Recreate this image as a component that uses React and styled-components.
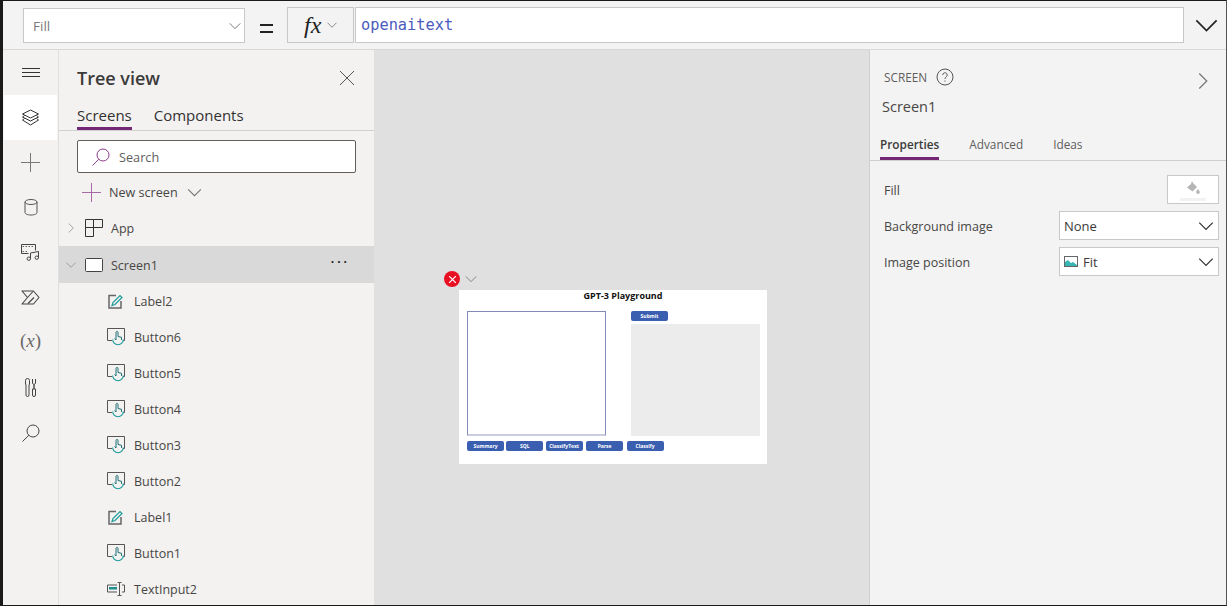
import React from "react";
import styled, { createGlobalStyle } from "styled-components";

const GlobalStyle = createGlobalStyle`
  html, body {
    margin: 0;
    padding: 0;
    background: #f3f2f1;
  }
  * {
    box-sizing: border-box;
  }
`;

const Frame = styled.div`
  width: 1227px;
  height: 606px;
  display: flex;
  flex-direction: column;
  overflow: hidden;
  border-left: 3px solid #1a1a1a;
  border-top: 1px solid #1a1a1a;
  border-bottom: 1px solid #1a1a1a;
  border-right: 1px solid #555;
  font-family: "Open Sans", "Liberation Sans", sans-serif;
  color: #3b3a39;
  background: #f3f2f1;
`;

const FormulaBar = styled.div`
  height: 49px;
  flex: none;
  display: flex;
  align-items: center;
  padding-left: 20px;
  background: #f3f3f3;
  border-bottom: 1px solid #d8d8d8;
`;

const PropertySelect = styled.div`
  width: 222px;
  height: 35px;
  margin-top: 1px;
  display: flex;
  align-items: center;
  justify-content: space-between;
  padding: 1px 2px 0 9px;
  background: #fff;
  border: 1px solid #c8c8c8;
  font-size: 13.5px;
  color: #7a7a7a;
`;

const Equals = styled.div`
  width: 42px;
  display: flex;
  justify-content: center;
`;

const EqualsMark = styled.span`
  display: block;
  width: 13px;
  height: 9px;
  margin: 7px 0 0 1px;
  border-top: 2px solid #222;
  border-bottom: 2px solid #222;
`;

const FxButton = styled.div`
  width: 67px;
  height: 36px;
  display: flex;
  align-items: center;
  padding-left: 16px;
  gap: 5px;
  background: #f3f3f3;
  border: 1px solid #c8c8c8;
`;

const FxText = styled.span`
  font-family: "Liberation Serif", serif;
  font-style: italic;
  font-size: 24px;
  line-height: 28px;
  color: #222;
`;

const FormulaInput = styled.div`
  width: 829px;
  height: 36px;
  display: flex;
  align-items: center;
  padding-left: 5px;
  background: #fff;
  border: 1px solid #c8c8c8;
  margin-left: 1px;
  font-family: "DejaVu Sans Mono", monospace;
  font-size: 15.3px;
  color: #4a5bbd;
`;

const ExpandButton = styled.div`
  flex: 1;
  display: flex;
  justify-content: center;
  align-items: center;
  padding-left: 2px;
`;

const Body = styled.div`
  flex: 1;
  min-height: 0;
  display: flex;
`;

const Rail = styled.div`
  width: 55px;
  flex: none;
  display: flex;
  flex-direction: column;
  background: #f3f2f1;
`;

const RailItem = styled.div`
  height: 45px;
  width: 53px;
  margin-left: 1px;
  display: flex;
  align-items: center;
  justify-content: center;
  background: ${(p) => (p.$active ? "#fff" : "transparent")};
`;

const TreePanel = styled.div`
  width: 316px;
  flex: none;
  display: flex;
  flex-direction: column;
  background: #f3f2f1;
  border-left: 1px solid #e1dfdd;
`;

const TreeHeader = styled.div`
  height: 55px;
  flex: none;
  display: flex;
  align-items: center;
  justify-content: space-between;
  padding: 0 20px 0 18px;
`;

const TreeTitle = styled.div`
  font-size: 18px;
  font-weight: 600;
  color: #3b3a39;
`;

const TabRow = styled.div`
  height: 26px;
  flex: none;
  display: flex;
  gap: 22px;
  padding-left: 18px;
  border-bottom: 1px solid #d2d0ce;
`;

const Tab = styled.div`
  height: 25px;
  font-size: 15px;
  line-height: 20px;
  color: #323130;
  border-bottom: ${(p) => (p.$active ? "3px solid #742774" : "none")};
`;

const SearchBox = styled.div`
  height: 33px;
  flex: none;
  margin: 9px 18px 0 18px;
  display: flex;
  align-items: center;
  gap: 9px;
  padding-left: 14px;
  background: #fff;
  border: 1px solid #605e5c;
  border-radius: 2px;
  font-size: 12.7px;
  color: #605e5c;
`;

const NewScreen = styled.div`
  height: 37px;
  flex: none;
  display: flex;
  align-items: center;
  padding: 2px 0 0 23px;
  gap: 8px;
  font-size: 12.6px;
  color: #484644;
`;

const TreeRow = styled.div`
  height: ${(p) => (p.$selected ? 37 : 36)}px;
  flex: none;
  display: flex;
  align-items: center;
  padding-left: ${(p) => p.$indent}px;
  padding-top: ${(p) => (p.$selected ? 1 : 0)}px;
  gap: ${(p) => p.$gap}px;
  font-size: 12.5px;
  color: #484644;
  background: ${(p) => (p.$selected ? "#d9d9d9" : "transparent")};
  position: relative;
`;

const IconSlot = styled.span`
  width: ${(p) => p.$width}px;
  display: flex;
  justify-content: center;
  flex: none;
`;

const MoreDots = styled.span`
  position: absolute;
  right: 24px;
  top: 8px;
  font-size: 12px;
  font-weight: 700;
  letter-spacing: 3px;
  line-height: 10px;
  color: #222;
`;

const Canvas = styled.div`
  flex: 1;
  min-width: 0;
  display: flex;
  flex-direction: column;
  align-items: flex-start;
  padding: 222px 0 0 85px;
  background: #e0e0e0;
  position: relative;
`;

const ErrorBadge = styled.div`
  position: absolute;
  left: 70px;
  top: 221px;
  display: flex;
  align-items: center;
  gap: 4px;
`;

const ErrorDot = styled.div`
  width: 16px;
  height: 16px;
  border-radius: 50%;
  background: #e81123;
  display: flex;
  align-items: center;
  justify-content: center;
`;

const AppScreen = styled.div`
  width: 308px;
  height: 174px;
  margin-top: 18px;
  background: #fff;
  padding: 0 7px 0 8px;
  display: flex;
  flex-direction: column;
`;

const AppTitle = styled.div`
  height: 21px;
  padding-left: 19px;
  text-align: center;
  font-size: 9px;
  font-weight: 700;
  line-height: 12px;
  color: #111;
`;

const AppColumns = styled.div`
  display: flex;
  justify-content: space-between;
`;

const PromptBox = styled.div`
  width: 139px;
  height: 125px;
  background: #fff;
  border: 1px solid #8389b8;
  border-bottom: 2px solid #c9cce0;
`;

const ResultColumn = styled.div`
  width: 129px;
  display: flex;
  flex-direction: column;
  align-items: flex-start;
  gap: 3px;
`;

const ResultBox = styled.div`
  width: 129px;
  height: 112px;
  background: #ececec;
`;

const AppButton = styled.div`
  width: 37px;
  height: 10px;
  background: #3b5fb0;
  border-radius: 2px;
  color: #fff;
  font-size: 5px;
  font-weight: 700;
  line-height: 10px;
  text-align: center;
  white-space: nowrap;
  overflow: hidden;
`;

const AppButtonRow = styled.div`
  display: flex;
  gap: 2.3px;
  margin-top: 5px;

  ${AppButton}:nth-child(n + 4) {
    margin-left: 1.2px;
  }
`;

const PropsPanel = styled.div`
  width: 357px;
  flex: none;
  display: flex;
  flex-direction: column;
  background: #f3f3f3;
  border-left: 1px solid #d2d0ce;
`;

const PropsHeader = styled.div`
  height: 83px;
  flex: none;
  padding: 17px 0 0 12px;
  position: relative;
`;

const PropsKind = styled.div`
  display: flex;
  align-items: center;
  gap: 9px;
  height: 20px;
  padding-left: 2px;
  font-size: 11.8px;
  color: #605e5c;
`;

const PropsName = styled.div`
  margin-top: 10px;
  font-size: 14.5px;
  line-height: 20px;
  color: #484644;
`;

const CollapseButton = styled.div`
  position: absolute;
  right: 13px;
  top: 21px;
`;

const PropsTabs = styled.div`
  height: 28px;
  flex: none;
  display: flex;
  gap: 30px;
  padding: 1px 0 0 10px;
  border-bottom: 1px solid #cfcfcf;
`;

const PropsTab = styled.div`
  height: 26px;
  font-size: 11.8px;
  line-height: 20px;
  font-weight: ${(p) => (p.$active ? 600 : 400)};
  color: ${(p) => (p.$active ? "#3b3a39" : "#605e5c")};
  border-bottom: ${(p) => (p.$active ? "3px solid #742774" : "none")};
`;

const PropRows = styled.div`
  display: flex;
  flex-direction: column;
  gap: 7px;
  padding: 14px 7px 0 14px;
`;

const PropRow = styled.div`
  height: 29px;
  display: flex;
  align-items: center;
  justify-content: space-between;
  font-size: 12.5px;
  color: #484644;
`;

const PropLabel = styled.span`
  padding-top: 2px;
`;

const ColorSwatch = styled.div`
  width: 52px;
  height: 29px;
  background: #fff;
  border: 1px solid #c8c8c8;
  display: flex;
  justify-content: center;
  padding-top: 4px;
`;

const PropSelect = styled.div`
  width: 160px;
  height: 29px;
  background: #fff;
  border: 1px solid #c8c8c8;
  display: flex;
  align-items: center;
  gap: 5px;
  padding: 0 3px 0 4px;
  font-size: 13px;
  color: #3b3a39;
`;

const SelectValue = styled.span`
  flex: 1;
`;

const RailVar = styled.span`
  font-family: "Liberation Serif", serif;
  font-size: 19px;
  padding-bottom: 3px;
  color: #6a6a6a;
`;

const Chevron = ({ size = 14, color = "#555", dir = "down", w = 1 }) => {
  const d = {
    down: "M2 5l6 6 6-6",
    right: "M5 2l6 6-6 6",
  }[dir];
  return (
    <svg width={size} height={size} viewBox="0 0 16 16" fill="none" stroke={color} strokeWidth={w}>
      <path d={d} />
    </svg>
  );
};

const MenuIcon = () => (
  <svg width="18" height="10" viewBox="0 0 18 10" fill="none" stroke="#333" strokeWidth="1">
    <path d="M0 .5h18M0 4.5h18M0 8.5h18" />
  </svg>
);

const LayersIcon = () => (
  <svg width="17" height="17" viewBox="0 0 17 17" fill="none" stroke="#333" strokeWidth="1" strokeLinejoin="round">
    <path d="M8.5 1l8 4-8 4-8-4z" />
    <path d="M2.5 6.500L.5 8l8 4 8-4-2-1.500" />
    <path d="M2.500 9.500L.5 11l8 5 8-5-2-1.500" />
  </svg>
);

const PlusIcon = ({ color = "#777" }) => (
  <svg width="19" height="19" viewBox="0 0 19 19" fill="none" stroke={color} strokeWidth="1">
    <path d="M9.500 0v19M0 9.500h19" />
  </svg>
);

const DataIcon = () => (
  <svg width="14" height="17" viewBox="0 0 14 17" fill="none" stroke="#555" strokeWidth="1">
    <ellipse cx="7" cy="3" rx="6" ry="2.500" />
    <path d="M1 3v10.500c0 1.500 2.500 2.500 6 2.500s6-1 6-2.500V3" />
  </svg>
);

const MediaIcon = () => (
  <svg width="19" height="17" viewBox="0 0 19 17" fill="none" stroke="#444" strokeWidth="1">
    <path d="M.5 .5h14M.5 9.500h7M.5 .5v9M14.500 .5v6" />
    <path d="M1.500 2.500h12M1.500 7.500h6" strokeDasharray="1.500 1.500" strokeWidth=".8" />
    <path d="M9.500 14.500V9l8-1.500v6" />
    <circle cx="7.800" cy="14.700" r="1.700" />
    <circle cx="15.800" cy="13.700" r="1.700" />
  </svg>
);

const FlowIcon = () => (
  <svg width="19" height="15" viewBox="0 0 19 15" fill="none" stroke="#444" strokeWidth="1.100" strokeLinejoin="round">
    <path d="M1 1h11.500l5.500 6.500-5.500 6.500H1l5.500-6.500z" />
    <path d="M6.500 7.500L12 1.500M7 13.500l6-6" />
  </svg>
);

const ToolsIcon = () => (
  <svg width="12" height="19" viewBox="0 0 12 19" fill="none" stroke="#444" strokeWidth="1">
    <path d="M.5 2.500a2 2 0 014 0V6L4 7v10a1.500 1.500 0 01-3 0V7l-.5-1z" />
    <path d="M7.500 1v4.500l1.500 1 1.500-1V1" />
    <path d="M9 6.500V11" strokeWidth="1.400" />
    <path d="M7.500 11h3v6a1.500 1.500 0 01-3 0z" />
  </svg>
);

const SearchIcon = ({ color = "#444" }) => (
  <svg width="18" height="18" viewBox="0 0 18 18" fill="none" stroke={color} strokeWidth="1">
    <circle cx="11" cy="7" r="6" />
    <path d="M6.800 11.300L.5 17.500" />
  </svg>
);

const CloseIcon = ({ size = 14, color = "#555", w = 1 }) => (
  <svg width={size} height={size} viewBox="0 0 14 14" fill="none" stroke={color} strokeWidth={w}>
    <path d="M0 0l14 14M14 0L0 14" />
  </svg>
);

const AppGridIcon = () => (
  <svg width="18" height="18" viewBox="0 0 18 18" fill="none" stroke="#333" strokeWidth="1">
    <path d="M.5.500h8v8h-8zM8.500.500h9v8h-9zM.5 8.500h8v9h-8z" />
  </svg>
);

const ScreenIcon = () => (
  <svg width="18" height="14" viewBox="0 0 18 14" fill="#fff" stroke="#444" strokeWidth="1">
    <rect x=".5" y=".5" width="17" height="13" rx="1" />
  </svg>
);

const LabelIcon = () => (
  <svg width="16" height="15" viewBox="0 0 16 15" fill="none">
    <path d="M8 1.500H1v12.500h12V7" stroke="#666" strokeWidth="1.500" />
    <path d="M4 11.500l1-3 7-7 2 2-7 7z" stroke="#1d9a9a" strokeWidth="1.200" />
  </svg>
);

const ButtonIcon = () => (
  <svg width="18" height="18" viewBox="0 0 18 18" fill="none">
    <path d="M5 12.500H.5V.5h17v12H16" stroke="#555" strokeWidth="1" />
    <path d="M5.700 11.400a5.300 5.300 0 1010.600 0" stroke="#1d9a9a" strokeWidth="1.100" />
    <path d="M7.500 10.500L9 12V4.500a1 1 0 012 0v4l3.500 .8V12" stroke="#1f6f75" strokeWidth="1" />
  </svg>
);

const TextInputIcon = () => (
  <svg width="18" height="14" viewBox="0 0 18 14" fill="none">
    <path d="M10 3H.5v7H10M15 3h2.500v7H15" stroke="#555" strokeWidth="1" />
    <path d="M2 5h8v2.500H2z" fill="#1d8f8f" />
    <path d="M10.500 .5h4M12.500 .5v13M10.500 13.500h4" stroke="#555" strokeWidth="1" />
  </svg>
);

const HelpIcon = () => (
  <svg width="18" height="18" viewBox="0 0 18 18" fill="none" stroke="#555" strokeWidth="1">
    <circle cx="9" cy="9" r="8" />
    <path d="M6.800 7a2.200 2.200 0 114 1.200C10 9.200 9 9.500 9 11" />
    <path d="M9 12.500v1.200" />
  </svg>
);

const BucketIcon = () => (
  <svg width="28" height="22" viewBox="0 0 28 22">
    <path d="M13 1l1 2 4 4-4.500 4.500L8 7.500l4-3.500z" fill="#b5b5b5" />
    <path d="M19 9c1 1.500 1.800 2.400 1.800 3.300a1.800 1.800 0 01-3.600 0c0-.9.800-1.800 1.800-3.300z" fill="#b5b5b5" />
    <rect x="1" y="18" width="26" height="3" fill="#f2f2f2" />
  </svg>
);

const PictureIcon = () => (
  <svg width="14" height="11" viewBox="0 0 14 11">
    <rect x=".5" y=".5" width="13" height="10" fill="#fff" stroke="#666" />
    <path d="M1 10V6l3-2 3 3 2-1 4 3v1z" fill="#3ab5b5" />
  </svg>
);

const railIcons = [
  <LayersIcon key="layers" />,
  <PlusIcon key="plus" />,
  <DataIcon key="data" />,
  <MediaIcon key="media" />,
  <FlowIcon key="flow" />,
  <RailVar key="var">
    (<i>x</i>)
  </RailVar>,
  <ToolsIcon key="tools" />,
  <SearchIcon key="search" />,
];

const controls = [
  { name: "Label2", icon: <LabelIcon /> },
  { name: "Button6", icon: <ButtonIcon /> },
  { name: "Button5", icon: <ButtonIcon /> },
  { name: "Button4", icon: <ButtonIcon /> },
  { name: "Button3", icon: <ButtonIcon /> },
  { name: "Button2", icon: <ButtonIcon /> },
  { name: "Label1", icon: <LabelIcon /> },
  { name: "Button1", icon: <ButtonIcon /> },
  { name: "TextInput2", icon: <TextInputIcon /> },
];

const bottomButtons = ["Summary", "SQL", "ClassifyText", "Parse", "Classify"];

function App() {
  return (
    <Frame>
      <GlobalStyle />
      <FormulaBar>
        <PropertySelect>
          Fill
          <Chevron size={14} color="#666" />
        </PropertySelect>
        <Equals>
          <EqualsMark />
        </Equals>
        <FxButton>
          <FxText>fx</FxText>
          <Chevron size={12} color="#666" />
        </FxButton>
        <FormulaInput>openaitext</FormulaInput>
        <ExpandButton>
          <Chevron size={27} color="#222" />
        </ExpandButton>
      </FormulaBar>
      <Body>
        <Rail>
          <RailItem>
            <MenuIcon />
          </RailItem>
          {railIcons.map((icon, i) => (
            <RailItem key={i} $active={i === 0}>
              {icon}
            </RailItem>
          ))}
        </Rail>
        <TreePanel>
          <TreeHeader>
            <TreeTitle>Tree view</TreeTitle>
            <CloseIcon size={14} />
          </TreeHeader>
          <TabRow>
            <Tab $active>Screens</Tab>
            <Tab>Components</Tab>
          </TabRow>
          <SearchBox>
            <SearchIcon color="#8a3d8a" />
            Search
          </SearchBox>
          <NewScreen>
            <PlusIcon color="#a66aa6" />
            New screen
            <Chevron size={17} color="#777" />
          </NewScreen>
          <TreeRow $indent={6} $gap={8}>
            <Chevron size={12} color="#888" dir="right" />
            <AppGridIcon />
            App
          </TreeRow>
          <TreeRow $indent={6} $gap={8} $selected>
            <Chevron size={12} color="#888" />
            <ScreenIcon />
            Screen1
            <MoreDots>...</MoreDots>
          </TreeRow>
          {controls.map((c) => (
            <TreeRow key={c.name} $indent={48} $gap={9}>
              <IconSlot $width={18}>{c.icon}</IconSlot>
              {c.name}
            </TreeRow>
          ))}
        </TreePanel>
        <Canvas>
          <ErrorBadge>
            <ErrorDot>
              <CloseIcon size={7} color="#fff" w={2.4} />
            </ErrorDot>
            <Chevron size={14} color="#777" />
          </ErrorBadge>
          <AppScreen>
            <AppTitle>GPT-3 Playground</AppTitle>
            <AppColumns>
              <PromptBox />
              <ResultColumn>
                <AppButton>Submit</AppButton>
                <ResultBox />
              </ResultColumn>
            </AppColumns>
            <AppButtonRow>
              {bottomButtons.map((label) => (
                <AppButton key={label}>{label}</AppButton>
              ))}
            </AppButtonRow>
          </AppScreen>
        </Canvas>
        <PropsPanel>
          <PropsHeader>
            <PropsKind>
              SCREEN
              <HelpIcon />
            </PropsKind>
            <PropsName>Screen1</PropsName>
            <CollapseButton>
              <Chevron size={20} color="#777" dir="right" />
            </CollapseButton>
          </PropsHeader>
          <PropsTabs>
            <PropsTab $active>Properties</PropsTab>
            <PropsTab>Advanced</PropsTab>
            <PropsTab>Ideas</PropsTab>
          </PropsTabs>
          <PropRows>
            <PropRow>
              <PropLabel>Fill</PropLabel>
              <ColorSwatch>
                <BucketIcon />
              </ColorSwatch>
            </PropRow>
            <PropRow>
              <PropLabel>Background image</PropLabel>
              <PropSelect>
                <SelectValue>None</SelectValue>
                <Chevron size={18} color="#333" w={1.1} />
              </PropSelect>
            </PropRow>
            <PropRow>
              <PropLabel>Image position</PropLabel>
              <PropSelect>
                <PictureIcon />
                <SelectValue>Fit</SelectValue>
                <Chevron size={18} color="#333" w={1.1} />
              </PropSelect>
            </PropRow>
          </PropRows>
        </PropsPanel>
      </Body>
    </Frame>
  );
}

export default App;
